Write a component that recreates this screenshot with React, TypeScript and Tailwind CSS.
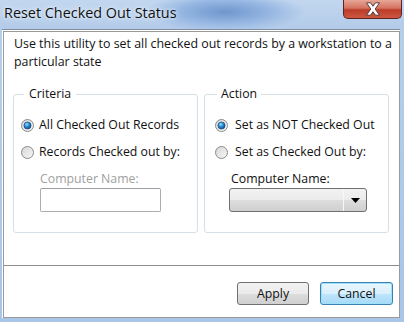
import React from "react";

const Radio = ({ checked }: { checked?: boolean }) => (
  <svg width="13" height="13" viewBox="0 0 13 13" className="shrink-0">
    <defs>
      <linearGradient id={checked ? "rgc" : "rgu"} x1="0" y1="0" x2="1" y2="1">
        <stop offset="0" stopColor="#d6d6d6" />
        <stop offset="1" stopColor="#f7f7f7" />
      </linearGradient>
      <radialGradient id="dot" cx="0.4" cy="0.35" r="0.7">
        <stop offset="0" stopColor="#9be0ff" />
        <stop offset="0.45" stopColor="#2a8fd2" />
        <stop offset="1" stopColor="#0a3f7a" />
      </radialGradient>
    </defs>
    <circle cx="6.5" cy="6.5" r="6" fill={`url(#${checked ? "rgc" : "rgu"})`} stroke="#8a8a8a" strokeWidth="1" />
    {checked && <circle cx="6.5" cy="6.5" r="3.6" fill="url(#dot)" stroke="#12467f" strokeWidth="0.6" />}
  </svg>
);

export default function App() {
  const font = { fontFamily: '"Segoe UI", "Open Sans", "Noto Sans", sans-serif' };
  return (
    <div
      className="w-[404px] h-[322px] flex flex-col bg-[linear-gradient(180deg,#b6cfec_0%,#a9c5e7_100%)] text-[#111] overflow-hidden"
      style={font}
    >
      {/* Title bar */}
      <div className="h-[29px] flex items-start justify-between bg-[radial-gradient(ellipse_80px_20px_at_225px_12px,#6f96cd_0%,#95b6e2_55%,rgba(0,0,0,0)_100%),linear-gradient(180deg,#c2d7ef_0%,#b3cbe9_100%)]">
        <div className="pl-[4px] pt-[3px] text-[14.4px] leading-[20px] text-[#111] [text-shadow:0_0_6px_#e8f1fb,0_0_3px_#e8f1fb]">
          Reset Checked Out Status
        </div>
        <div className="mr-[2px] w-[59px] h-[19px] rounded-b-[5px] border border-t-0 border-[#5e2222] bg-[linear-gradient(180deg,#e8a696_0%,#d47261_45%,#bb3c29_55%,#cd5840_100%)] flex items-center justify-center">
          <svg width="18" height="14" viewBox="0 0 18 14">
            <path d="M2.5 0.8 L6.5 0.8 L9 4.3 L11.5 0.8 L15.5 0.8 L11.2 7 L15.5 13.2 L11.5 13.2 L9 9.7 L6.5 13.2 L2.5 13.2 L6.8 7 Z" fill="#ffffff" stroke="#4a3030" strokeWidth="0.9" strokeLinejoin="round" />
          </svg>
        </div>
      </div>

      {/* Client */}
      <div className="ml-[2px] mr-[4px] h-[289px] bg-white border-t border-[#7f8ea3] pl-[1px] pt-[1px]">
        <div className="h-[287px] border border-[#9a9a9a] flex flex-col">
          {/* Top section */}
          <div className="h-[234px] border-b border-[#8c8c8c] pl-[9px] pt-[3px]">
            <p className="pl-[1px] text-[12.4px] leading-[18px] whitespace-nowrap">
              <span>Use this utility to set all checked out records by a workstation to a</span>
              <br />
              <span>particular state</span>
            </p>
            <div className="mt-[15px] flex gap-[6px]">
              <fieldset className="w-[185px] h-[147px] border border-[#d5dfe5] rounded-[3px] pl-[7px] pt-[14px] m-0">
                <legend className="ml-[3px] px-[5px] text-[12.3px] leading-[16px]">Criteria</legend>
                <div className="flex flex-col">
                  <label className="flex items-center gap-[5px] h-[18px] text-[12.3px]">
                    <Radio checked />
                    <span>All Checked Out Records</span>
                  </label>
                  <label className="mt-[9px] flex items-center gap-[5px] h-[18px] text-[12.3px]">
                    <Radio />
                    <span>Records Checked out by:</span>
                  </label>
                  <div className="mt-[9px] pl-[19px] text-[12.3px] leading-[18px] text-[#a0a0a0]">Computer Name:</div>
                  <div className="ml-[19px] w-[121px] h-[24px] border border-[#abadb3] border-t-[#9b9ea5] rounded-[2px] bg-white" />
                </div>
              </fieldset>
              <fieldset className="w-[185px] h-[147px] border border-[#d5dfe5] rounded-[3px] pl-[10px] pt-[14px] m-0">
                <legend className="ml-[2px] px-[4px] text-[12.3px] leading-[16px]">Action</legend>
                <div className="flex flex-col">
                  <label className="flex items-center gap-[7px] h-[18px] text-[12.3px]">
                    <Radio checked />
                    <span>Set as NOT Checked Out</span>
                  </label>
                  <label className="mt-[9px] flex items-center gap-[7px] h-[18px] text-[12.3px]">
                    <Radio />
                    <span>Set as Checked Out by:</span>
                  </label>
                  <div className="mt-[9px] pl-[16px] text-[12.3px] leading-[18px]">Computer Name:</div>
                  <div className="ml-[14px] w-[138px] h-[24px] border border-[#707070] rounded-[3px] flex bg-[linear-gradient(180deg,#f2f2f2_0%,#ebebeb_50%,#dddddd_51%,#cfcfcf_100%)]">
                    <div className="flex-1 border-r border-[#f8f8f8]" />
                    <div className="w-[22px] flex items-center justify-center">
                      <svg width="9" height="5" viewBox="0 0 9 5">
                        <path d="M0 0 L9 0 L4.5 5 Z" fill="#000" />
                      </svg>
                    </div>
                  </div>
                </div>
              </fieldset>
            </div>
          </div>
          {/* Buttons */}
          <div className="flex-1 flex justify-end items-start gap-[11px] pr-[6px] pt-[16px]">
            <button className="w-[72px] h-[23px] rounded-[3px] border border-[#707070] text-[12.3px] leading-[20px] text-[#111] bg-[linear-gradient(180deg,#f2f2f2_0%,#ebebeb_50%,#dddddd_51%,#cfcfcf_100%)]">
              Apply
            </button>
            <button className="w-[73px] h-[23px] rounded-[3px] border border-[#3c7fb1] text-[12.3px] leading-[20px] text-[#111] shadow-[inset_0_0_0_1px_#9ee1fb] bg-[linear-gradient(180deg,#eaf6fd_0%,#d9f0fc_50%,#bee6fd_51%,#a7d9f5_100%)]">
              Cancel
            </button>
          </div>
        </div>
      </div>
    </div>
  );
}
